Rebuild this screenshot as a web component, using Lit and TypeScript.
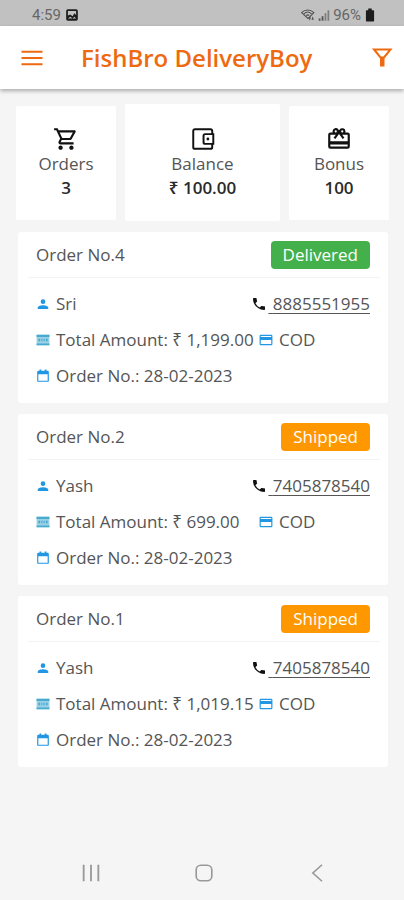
import { LitElement, html, css, svg } from "lit";
import { customElement, property } from "lit/decorators.js";
import { classMap } from "lit/directives/class-map.js";

type Order = { no: number; status: "Delivered" | "Shipped"; name: string; phone: string; total: string; date: string };

const ORDERS: Order[] = [
  { no: 4, status: "Delivered", name: "Sri", phone: "8885551955", total: "1,199.00", date: "28-02-2023" },
  { no: 2, status: "Shipped", name: "Yash", phone: "7405878540", total: "699.00", date: "28-02-2023" },
  { no: 1, status: "Shipped", name: "Yash", phone: "7405878540", total: "1,019.15", date: "28-02-2023" },
];

const ICONS = {
  menu: svg`<path d="M1.500 4.700h21v2h-21zM1.500 11h21v2h-21zM1.500 17.300h21v2h-21z"/>`,
  filter: svg`<path fill="none" stroke="currentColor" stroke-width="2" d="M4 3.500h16.500L14 11.500h-3.500z"/><path d="M10 11h4.500v9.500H10z"/>`,
  cart: svg`<path d="M15.550 13c.75 0 1.410-.41 1.750-1.030l3.580-6.490A.996.996 0 0 0 20.010 4H5.210l-.94-2H1v2h2l3.600 7.590-1.350 2.440C4.520 15.370 5.480 17 7 17h12v-2H7l1.100-2h7.450zM6.160 6h12.150l-2.760 5H8.530L6.160 6zM7 18c-1.100 0-1.990.9-1.990 2S5.900 22 7 22s2-.9 2-2-.9-2-2-2zm10 0c-1.100 0-1.990.9-1.990 2s.89 2 1.990 2 2-.9 2-2-.9-2-2-2z"/>`,
  wallet: svg`<path fill="none" stroke="currentColor" stroke-width="1.800" d="M20.500 7V4.500a1.500 1.500 0 0 0-1.500-1.500H4.500A1.500 1.500 0 0 0 3 4.500v15A1.500 1.500 0 0 0 4.500 21H19a1.500 1.500 0 0 0 1.500-1.500V17M14 7.500h7.500v9H14a1.500 1.500 0 0 1-1.500-1.500V9A1.500 1.500 0 0 1 14 7.500z"/><circle cx="16.500" cy="12" r="1.300"/>`,
  gift: svg`<path d="M20 6h-2.180c.11-.31.18-.65.18-1a3 3 0 0 0-5.500-1.650l-.5.670-.5-.680A3 3 0 0 0 6 5c0 .35.070.69.180 1H4a2 2 0 0 0-1.990 2L2 19a2 2 0 0 0 2 2h16a2 2 0 0 0 2-2V8a2 2 0 0 0-2-2zm-5-2a1 1 0 1 1 0 2 1 1 0 0 1 0-2zM9 4a1 1 0 1 1 0 2 1 1 0 0 1 0-2zm11 15H4v-2h16v2zm0-5H4V8h5.080L7 10.830 8.620 12 12 7.400l3.380 4.600L17 10.830 14.920 8H20v6z"/>`,
  person: svg`<path d="M12 12a4 4 0 1 0 0-8 4 4 0 0 0 0 8zm0 2c-2.670 0-9 1.340-9 4v2.500h18V18c0-2.660-6.330-4-9-4z"/>`,
  money: svg`<rect x="1" y="3" width="22" height="18" rx="1" opacity=".55"/><path d="M1 3h22v4H1zM1 18h22v3H1zM4 10h3v4H4zM9 10h2v4H9zM13 10h2v4h-2zM17 10h3v4h-3z"/>`,
  calendar: svg`<path d="M20 3h-2V1h-3v2H9V1H6v2H4a2 2 0 0 0-2 2v15a2 2 0 0 0 2 2h16a2 2 0 0 0 2-2V5a2 2 0 0 0-2-2zm0 17H4V9h16z"/>`,
  card: svg`<path d="M21 3H3a2 2 0 0 0-2 2v14a2 2 0 0 0 2 2h18a2 2 0 0 0 2-2V5a2 2 0 0 0-2-2zm0 16H3v-7h18zm0-12H3V5h18z"/>`,
  phone: svg`<path d="M6.620 10.790a15 15 0 0 0 6.590 6.590l2.200-2.200a1 1 0 0 1 1.020-.24c1.120.37 2.330.57 3.570.57a1 1 0 0 1 1 1V20a1 1 0 0 1-1 1C10.610 21 3 13.390 3 4a1 1 0 0 1 1-1h3.500a1 1 0 0 1 1 1c0 1.250.2 2.450.57 3.570a1 1 0 0 1-.25 1.020z"/>`,
  picture: svg`<path fill-rule="evenodd" d="M5 2h14a3 3 0 0 1 3 3v14a3 3 0 0 1-3 3H5a3 3 0 0 1-3-3V5a3 3 0 0 1 3-3zM5 5v8l4-2 4 3 3-5 3 3V5zM5 18h14l-3-3-3 3-4-3z"/>`,
  wifi: svg`<path fill="none" stroke="currentColor" stroke-width="1.800" d="M1 8c6-6 15-6 21 0L12 18zM5 10c4-4 9-4 13 0M9 13c2-2 3-2 5 0"/><path d="M13 16h4l-2 6zM18 20l2-6 2 6z"/>`,
  signal: svg`<path d="M3 18h3v4H3zM8 14h3v8H8z"/><path opacity=".6" d="M13 9h3v13h-3zM18 4h3v18h-3z"/>`,
  battery: svg`<path d="M9 1h6v3h3a1 1 0 0 1 1 1v17a1 1 0 0 1-1 1H6a1 1 0 0 1-1-1V5a1 1 0 0 1 1-1h3z"/>`,
  recents: svg`<path d="M3 3h2v18H3zM11 3h2v18h-2zM19 3h2v18h-2z"/>`,
  home: svg`<rect x="3.500" y="3.500" width="17" height="17" rx="5" fill="none" stroke="currentColor" stroke-width="1.800"/>`,
  back: svg`<path fill="none" stroke="currentColor" stroke-width="1.800" d="M17.500 3 7.500 12l10 9"/>`,
};

const icon = (name: keyof typeof ICONS) =>
  html`<svg class="icon ${name}" viewBox="0 0 24 24" fill="currentColor" aria-hidden="true">${ICONS[name]}</svg>`;

const shared = css`
  * { box-sizing: border-box; }
  .icon { display: block; flex: none; width: 16px; height: 16px; }
`;

@customElement("order-card")
class OrderCard extends LitElement {
  @property({ attribute: false }) order!: Order;

  static styles = [shared, css`
    :host { display: block; background: #fff; border-radius: 3px; padding: 0 8px 9px 10px; }
    .head { display: flex; justify-content: space-between; align-items: center; height: 46px; padding: 0 10px 0 8px; border-bottom: 1px solid #f3f3f3; }
    h2 { margin: 0; font-size: 17px; font-weight: 400; }
    .badge { padding: 0 12px; border-radius: 4px; font-size: 17px; line-height: 28px; color: #fff; background: #ff9800; }
    .badge.delivered { background: #44b04c; }
    .body { padding: 8px 10px 0 8px; }
    .row { display: flex; align-items: center; height: 36px; white-space: nowrap; }
    .row .icon { color: #2196e3; margin-right: 6px; width: 14px; height: 14px; }
    .row .money { color: #49aad0; }
    .amount { min-width: 203px; }
    .tel { display: flex; align-items: center; margin-left: auto; }
    .tel .phone { color: #111; width: 16px; height: 16px; margin-right: 1px; }
    a { color: inherit; white-space: pre; text-decoration-thickness: 1px; text-underline-offset: 3px; }
  `];

  render() {
    const o = this.order;
    return html`
      <div class="head">
        <h2>Order No.${o.no}</h2>
        <span class="badge ${classMap({ delivered: o.status === "Delivered" })}">${o.status}</span>
      </div>
      <div class="body">
        <div class="row">${icon("person")}<span>${o.name}</span>
          <span class="tel">${icon("phone")}<a href="tel:${o.phone}"> ${o.phone}</a></span>
        </div>
        <div class="row">${icon("money")}<span class="amount">Total Amount: ₹ ${o.total}</span>${icon("card")}<span>COD</span></div>
        <div class="row">${icon("calendar")}<span>Order No.: ${o.date}</span></div>
      </div>`;
  }
}

@customElement("app-root")
class AppRoot extends LitElement {
  static styles = [shared, css`
    :host { display: flex; flex-direction: column; min-height: 100vh; background: #f5f5f5; color: #555; font: 17px/24px "Open Sans", "Noto Sans", sans-serif; }
    button { display: flex; align-items: center; justify-content: center; padding: 0; border: 0; background: none; color: inherit; }
    .status { display: flex; justify-content: space-between; height: 26px; padding: 4px 27px 0 32px; background: #c1c1c1; color: #666; font: 15px/24px Roboto, sans-serif; }
    .group { display: flex; align-items: center; gap: 4px; }
    .status .icon { color: #1c1c1c; width: 14px; height: 14px; }
    .status .wifi, .status .signal { color: #505050; }
    .status .right { gap: 2px; }
    .bar { display: flex; align-items: center; height: 63px; padding: 0 10px 0 20px; background: #fff; color: #ee6a10; box-shadow: 0 2px 4px #0000004d; }
    .bar .icon { width: 24px; height: 24px; }
    h1 { flex: 1; margin: 0; padding-left: 37px; font-size: 24px; font-weight: 600; line-height: 32px; white-space: nowrap; }
    main { flex: 1; padding: 15px 15px 0 16px; }
    .stats { display: grid; grid-template-columns: 100fr 155fr 100fr; gap: 9px; align-items: center; }
    .stat { display: flex; flex-direction: column; align-items: center; justify-content: center; height: 114px; background: #fff; border-radius: 2px; }
    .stat.wide { height: 117px; }
    .stat .icon { width: 26px; height: 26px; color: #111; }
    .stat strong { font-weight: 600; color: #2a2a2a; }
    .orders { display: flex; flex-direction: column; gap: 11px; padding: 11px 1px 0 2px; }
    .nav { display: flex; align-items: center; justify-content: space-around; height: 54px; padding: 0 31px 0 34px; color: #999; }
    .nav .icon { width: 22px; height: 22px; }
  `];

  render() {
    return html`
      <div class="status">
        <span class="group">4:59 ${icon("picture")}</span>
        <span class="group right">${icon("wifi")}${icon("signal")}<span>96%</span>${icon("battery")}</span>
      </div>
      <header class="bar">
        <button aria-label="Menu">${icon("menu")}</button>
        <h1>FishBro DeliveryBoy</h1>
        <button aria-label="Filter">${icon("filter")}</button>
      </header>
      <main>
        <section class="stats">
          <div class="stat">${icon("cart")}<span>Orders</span><strong>3</strong></div>
          <div class="stat wide">${icon("wallet")}<span>Balance</span><strong>₹ 100.00</strong></div>
          <div class="stat">${icon("gift")}<span>Bonus</span><strong>100</strong></div>
        </section>
        <section class="orders">${ORDERS.map((o) => html`<order-card .order=${o}></order-card>`)}</section>
      </main>
      <nav class="nav">
        <button aria-label="Recents">${icon("recents")}</button>
        <button aria-label="Home">${icon("home")}</button>
        <button aria-label="Back">${icon("back")}</button>
      </nav>`;
  }
}
